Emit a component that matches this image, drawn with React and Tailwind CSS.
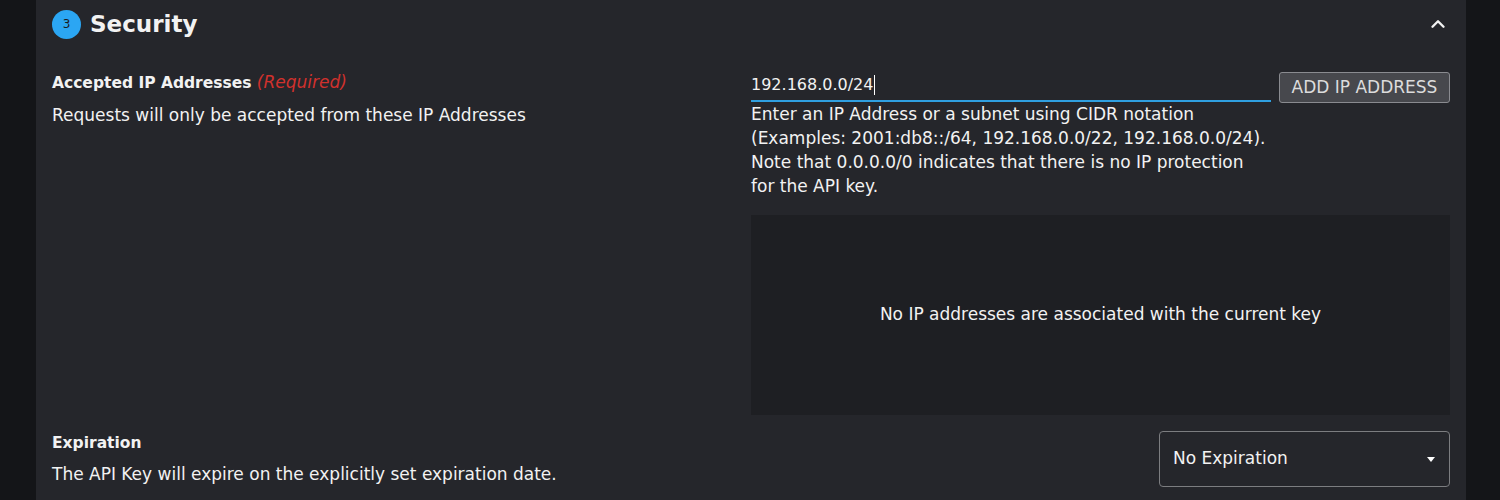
import { ChevronUp } from "lucide-react";

export default function App() {
    return (
        <div
            className="w-[1500px] h-[500px] overflow-hidden bg-[#141518] pl-[36px] pr-[34px] text-[#f2f2f2] text-[17px]"
            style={{ fontFamily: '"DejaVu Sans", "Noto Sans", sans-serif' }}
        >
            <div className="h-full bg-[#25262b] px-4">
                <div className="flex items-center h-[48px]">
                    <div className="flex items-center justify-center w-[29px] h-[29px] rounded-full bg-[#2ba6f3] text-[#1a1b1e] text-[12px]">
                        3
                    </div>
                    <h2 className="ml-[9px] text-[23px] font-bold">Security</h2>
                    <ChevronUp className="ml-auto mr-px" size={22} strokeWidth={2.6} />
                </div>

                <div className="grid grid-cols-2 mt-[22px]">
                    <div>
                        <div className="leading-6">
                            <span className="text-[15.5px] font-bold">Accepted IP Addresses</span>{" "}
                            <span className="italic text-[#d0312d]">(Required)</span>
                        </div>
                        <p className="mt-[8px] leading-6">
                            Requests will only be accepted from these IP Addresses
                        </p>
                    </div>
                    <div>
                        <div className="flex items-start gap-2">
                            <div className="flex-1">
                                <div className="flex items-center h-[32px] border-b-2 border-[#2f9fe0] text-[16px]">
                                    192.168.0.0/24
                                    <span className="ml-px w-px h-[20px] bg-white" />
                                </div>
                                <p className="leading-[24px]">
                                    Enter an IP Address or a subnet using CIDR notation (Examples: 2001:db8::/64,
                                    192.168.0.0/22, 192.168.0.0/24). Note that 0.0.0.0/0 indicates that there is no IP
                                    protection for the API key.
                                </p>
                            </div>
                            <button className="mt-[2px] w-[171px] h-[31px] rounded-[3px] border border-[#8a8b90] bg-[#47484d] text-[#dcdcdc]">
                                ADD IP ADDRESS
                            </button>
                        </div>
                        <div className="mt-[17px] h-[200px] flex items-center justify-center bg-[#1e1f23]">
                            No IP addresses are associated with the current key
                        </div>
                    </div>
                </div>

                <div className="flex items-start justify-between mt-[16px]">
                    <div>
                        <div className="text-[15.5px] font-bold leading-6">Expiration</div>
                        <p className="mt-[7px] leading-6">
                            The API Key will expire on the explicitly set expiration date.
                        </p>
                    </div>
                    <div className="w-[291px] h-[56px] flex items-center px-[13px] rounded-[4px] border border-[#7c7d80]">
                        No Expiration
                        <span className="ml-auto mr-[1px] w-0 h-0 border-l-[4px] border-r-[4px] border-t-[5px] border-l-transparent border-r-transparent border-t-white" />
                    </div>
                </div>
            </div>
        </div>
    );
}
